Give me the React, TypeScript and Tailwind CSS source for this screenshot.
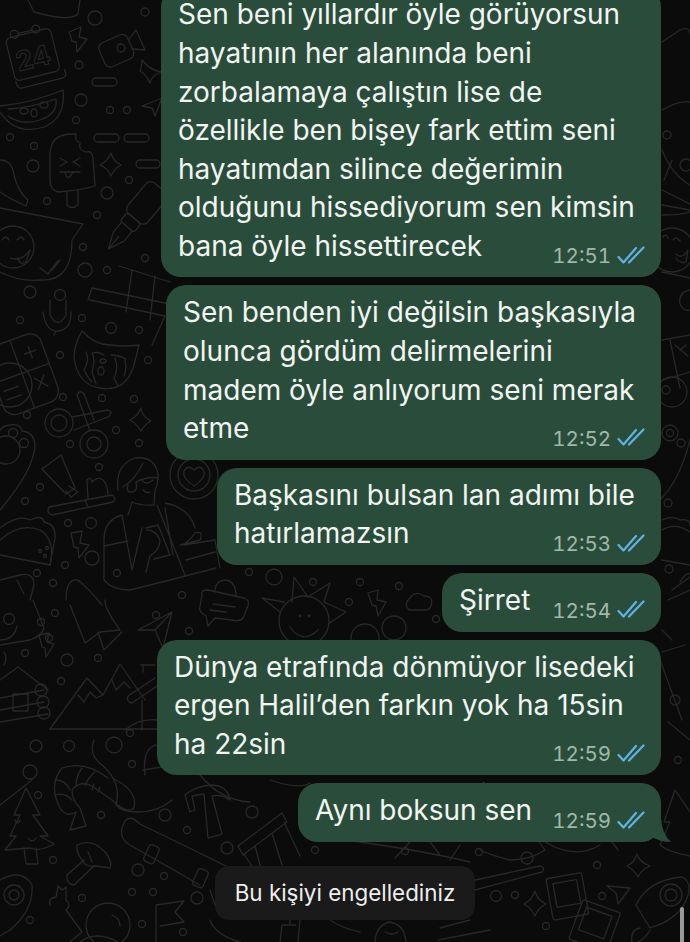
import React from 'react';

// wallpaper dots: [x, y, r]
const dots: number[][] = [
  [95, 18, 7], [121, 48, 4], [145, 12, 4], [79, 65, 4], [81, 100, 6], [110, 110, 3.5], [127, 110, 3.5], [76, 120, 3.5],
  [10, 137, 3.5], [34, 146, 3.5], [33, 166, 6], [129, 180, 3.5], [107, 193, 6], [47, 201, 3.5], [97, 215, 3.5], [83, 247, 3.5],
  [85, 270, 7], [145, 258, 3.5], [107, 270, 3.5], [30, 292, 6], [60, 295, 5.5], [20, 320, 3.5], [82, 318, 3.5], [111, 328, 5.5],
  [139, 330, 3.5], [60, 355, 3.5], [148, 360, 3.5], [63, 397, 3.5], [102, 398, 3.5], [134, 399, 3.5], [27, 415, 3.5], [116, 430, 3.5],
  [70, 444, 3.5], [139, 443, 3.5], [99, 467, 3.5], [40, 487, 3.5], [25, 501, 3.5], [68, 523, 3.5], [91, 523, 5.5], [37, 573, 3.5],
  [65, 565, 3.5], [53, 583, 3.5], [92, 558, 7], [182, 595, 3.5], [9, 619, 5.5], [41, 622, 3.5], [49, 638, 3.5], [117, 573, 3.5],
  [249, 572, 3.5], [274, 577, 8], [313, 582, 3.5], [360, 582, 3.5], [399, 586, 3.5], [349, 602, 3.5], [436, 619, 3.5], [489, 624, 3.5],
  [55, 613, 3.5], [156, 615, 3.5], [189, 631, 3.5], [25, 653, 3.5], [67, 660, 6], [98, 658, 3.5], [61, 681, 3.5], [36, 746, 6],
  [69, 746, 5.5], [130, 733, 3.5], [114, 745, 8], [132, 764, 3.5], [30, 772, 7], [38, 795, 3.5], [101, 815, 3.5], [165, 815, 6],
  [252, 812, 6], [187, 830, 3.5], [227, 848, 6], [138, 870, 6], [164, 876, 3.5], [53, 860, 3.5], [132, 892, 3.5], [153, 892, 3.5],
  [197, 898, 6], [82, 898, 3.5], [30, 920, 3.5], [142, 924, 3.5], [183, 932, 3.5], [527, 858, 6], [597, 865, 3.5], [496, 896, 5.5],
  [515, 895, 3.5], [602, 896, 3.5], [470, 877, 3.5], [546, 926, 3.5], [666, 390, 4], [667, 135, 4], [686, 165, 6], [668, 503, 4],
  [669, 569, 4], [440, 805, 3.5], [315, 850, 3.5], [405, 851, 3.5], [479, 852, 3.5], [675, 700, 5], [678, 760, 3.5], [350, 905, 3.5],
];

const Wallpaper = () => (
  <svg
    className="absolute inset-0"
    width="690"
    height="942"
    viewBox="0 0 690 942"
    fill="none"
    stroke="#282828"
    strokeWidth="1.3"
    strokeLinecap="round"
    strokeLinejoin="round"
  >
    {dots.map(([x, y, r], i) => (
      <circle key={i} cx={x} cy={y} r={r} />
    ))}

    {/* pills */}
    <rect x="92" y="78" width="25" height="8" rx="4" />
    <rect x="94" y="134" width="25" height="8" rx="4" />
    <rect x="124" y="134" width="25" height="8" rx="4" />
    <rect x="136" y="160" width="24" height="8" rx="4" />

    {/* top scrap + calendar */}
    <path d="M28 0 L34 12 Q70 22 78 14 L80 0" />
    <g transform="rotate(-14 35 55)">
      <rect x="10" y="32" width="46" height="44" rx="5" />
      <path d="M10 76 Q9 84 16 84 L56 84 Q62 84 60 76" />
      <circle cx="20" cy="30" r="4" />
      <circle cx="42" cy="30" r="4" />
      <path d="M24 30 H38" />
      <text x="15" y="67" fontFamily="Inter, sans-serif" fontSize="27" fontWeight="700" fill="none" stroke="#282828" strokeWidth="1">24</text>
    </g>
    {/* bolts */}
    <path d="M69 32 L81 27 L79 37 L87 39 L77 52 L76 42 L72 41 Z" />
    <path d="M39 635 L49 633 L47 642 L54 644 L46 657 L45 648 L42 647 Z" />
    <path d="M71 533 L82 531 L80 543 L89 545 L79 558 L78 548 L74 547 Z" />
    <path d="M368 593 L378 590 L377 600 L386 602 L378 616 L376 606 L372 605 Z" />
    {/* camera */}
    <g transform="rotate(-24 120 48)">
      <rect x="100" y="36" width="31" height="26" rx="6" />
      <path d="M131 44 L142 38 L142 60 L131 54" />
    </g>
    {/* sparkles */}
    <path d="M142 60 Q150 70 161 72 Q152 75 150 83 Q146 74 140 71 Q142 66 142 60 Z" />
    <path d="M111 153 Q113 161 121 165 Q114 169 111 176 Q108 168 100 165 Q108 161 111 153 Z" />
    <path d="M141 408 Q142 417 151 421 Q144 425 141 431 Q137 424 130 420 Q138 416 141 408 Z" />
    <path d="M535 891 Q537 900 546 904 Q538 908 535 916 Q531 908 524 904 Q532 900 535 891 Z" />
    <path d="M637 854 Q639 862 650 866 Q641 870 638 877 Q634 870 627 866 Q635 862 637 854 Z" />
    {/* plane */}
    <path d="M142 106 L162 98 L155 116 L152 108 Z" />
    <path d="M607 886 L630 888 L618 904 L616 893 Z" />
    <path d="M138 630 L172 612 L163 648 L155 630 Z M155 630 L172 612" />
    <path d="M32 780 L0 805" />
    {/* watermelon */}
    <path d="M0 106 Q32 103 63 90 Q66 118 44 127 Q16 136 0 112" />
    <path d="M8 109 Q30 108 56 99 Q58 114 40 120 Q22 126 8 116" />
    <ellipse cx="24" cy="111" rx="4" ry="3" />
    <ellipse cx="34" cy="113" rx="3" ry="4" />
    <ellipse cx="44" cy="105" rx="4" ry="3" />
    {/* popsicle */}
    <path d="M50 155 Q50 134 72 134 L76 134 Q74 140 80 143 Q78 150 86 152 Q92 150 93 158 L95 186 Q82 190 58 192 Q50 190 50 180 Z" />
    <path d="M67 192 V205 Q72 210 78 205 V190" />
    <path d="M60 158 L67 162 L60 166 M80 158 L73 162 L80 166 M60 172 H80 M65 172 Q67 183 73 172" />
    {/* chili */}
    <path d="M0 160 Q12 160 14 175 Q18 192 28 200 L26 206 Q8 198 0 192" />
    {/* bowl + smile */}
    <path d="M0 208 L83 224 L72 240 Q72 282 40 280 Q20 282 0 272" />
    <circle cx="13" cy="247" r="21" />
    <path d="M2 240 Q6 234 9 240 M17 240 Q21 234 24 240 M10 258 Q22 262 30 250 L26 262 Q20 266 18 258" />
    <path d="M40 268 L48 274 L58 261 M52 270 L60 260" />
    {/* pen */}
    <g transform="rotate(40 130 220)">
      <rect x="119" y="176" width="26" height="40" rx="6" />
      <rect x="123" y="216" width="18" height="11" rx="3" />
      <path d="M125 227 L125 240 L132 256 L139 240 L139 227 M132 256 V240" />
    </g>
    {/* window grid */}
    <path d="M119 266 L170 282 M92 288 L170 304 M132 270 L126 312 M155 276 L150 320 M92 288 L88 300" />
    <path d="M90 300 L165 316 L152 345" />
    {/* mic */}
    <path d="M50 300 V315 Q58 330 66 315 V300 M43 312 Q46 332 58 331 Q71 330 71 312 M56 331 L54 335" />
    {/* cat */}
    <path d="M82 331 Q95 345 110 345 Q125 347 139 345 Q136 358 133 368 Q125 392 100 388 Q78 385 74 358 Q74 345 82 331 Z" />
    <path d="M86 352 Q90 360 84 370 Q88 378 92 382 M92 353 Q96 360 92 372 L96 384 M115 358 Q119 368 114 378 L118 386 M125 360 Q127 370 124 376 M93 353 Q98 351 104 355 M111 355 Q118 355 126 359" />
    <ellipse cx="103" cy="361" rx="3" ry="2" />
    <ellipse cx="101" cy="371" rx="3" ry="4" />
    {/* calculator */}
    <g transform="rotate(-20 25 370)">
      <rect x="-8" y="337" width="58" height="72" rx="12" />
      <path d="M-8 372 H50 M21 337 V409 M30 355 H42 M36 349 V361 M31 381 L41 393 M41 381 L31 393 M-2 383 H13 M-2 392 H13" />
    </g>
    <circle cx="10" cy="385" r="22" />
    {/* scissors */}
    <circle cx="59" cy="423" r="14" />
    <circle cx="59" cy="423" r="8" />
    <circle cx="94" cy="444" r="14" />
    <circle cx="94" cy="444" r="7" />
    <path d="M72 417 L108 410 Q114 412 108 417 L74 430 M90 431 L77 395 Q80 389 84 394 L94 420" />
    {/* paw */}
    <path d="M0 510 Q34 470 35 445 Q34 432 22 431 Q20 423 10 425 Q4 425 0 430" />
    <circle cx="13" cy="433" r="4.5" />
    <circle cx="24" cy="443" r="4.5" />
    <circle cx="6" cy="450" r="14" />
    {/* tube */}
    <path d="M42 469 L61 455 L75 488 L66 494 Z M69 486 L78 492 L71 497 L66 491" />
    {/* toast tray */}
    <path d="M49 507 L112 495 Q117 498 113 502 L52 515 Q46 513 49 507 Z M85 500 L88 507" />
    <path d="M88 499 L87 480 Q90 476 92 482 Q97 476 103 480 Q107 483 108 494" />
    {/* man */}
    <path d="M118 490 Q115 465 135 458 Q152 456 157 470 Q160 480 155 490 L154 505 Q142 506 132 502 L128 515" />
    <path d="M123 487 Q135 480 143 463 M136 482 Q148 476 158 478 M128 485 Q125 493 133 492 Q138 490 136 483 M142 480 Q146 486 153 480 M143 490 Q147 494 150 492" />
    <path d="M122 515 Q104 520 104 540 V580 Q112 590 130 590 L170 580 L216 568 M165 503 Q190 508 195 528 M122 515 L132 570 L142 528 M157 505 L185 575 M104 546 L128 541 M165 508 L173 555" />
    <path d="M146 528 L158 525 L170 555 L154 559 M147 530 Q156 530 160 540 Q160 550 150 556 L146 572" />
    <path d="M180 545 L200 540 Q204 530 195 533 Q192 538 183 545 M183 545 L215 540 L220 568 M186 560 L215 552" />
    {/* coffee heart */}
    <circle cx="194" cy="475" r="24" />
    <circle cx="194" cy="475" r="16" />
    <path d="M194 486 Q182 478 184 471 Q188 464 194 470 Q200 464 204 471 Q206 478 194 486 Z" />
    {/* taco */}
    <path d="M0 528 Q18 514 30 520 Q42 514 44 522 Q56 524 55 538 L50 565 L0 555" />
    <path d="M0 540 Q20 522 40 530 Q56 540 50 565" />
    <circle cx="40" cy="551" r="1.5" />
    <circle cx="47" cy="548" r="1.5" />
    <circle cx="45" cy="556" r="1.5" />
    {/* bread */}
    <path d="M0 580 L20 575 Q34 572 34 585 L30 600 M0 578 M17 580 L24 594" />
    <path d="M66 600 Q66 578 78 580 Q90 590 102 605" />
    {/* lock chat */}
    <path d="M202 595 Q200 590 208 590 L244 598 Q250 600 248 606 L243 618 Q240 622 232 620 L215 618 L208 626 L206 616 Q198 612 200 606 Z" />
    <path d="M215 590 Q216 580 226 580 Q236 582 236 596 M213 604 L235 607 M210 610 L226 612" />
    {/* sun */}
    <circle cx="304" cy="621" r="25" />
    <path d="M292 602 L294 577 L308 597 L330 583 L324 602 L346 612 L328 624 M280 612 L262 598 L284 602 M290 627 Q302 645 318 630" />
    <circle cx="300" cy="616" r="0.8" />
    <circle cx="309" cy="616" r="0.8" />
    {/* cloud */}
    <path d="M409 610 Q403 604 410 598 Q416 590 424 596 Q434 596 431 606 Q430 610 424 610 Z" />
    <circle cx="365" cy="638" r="14" />
    <circle cx="394" cy="628" r="12" />
    {/* rocket top-left of bubble 5 */}
    <path d="M70 605 L85 643 L100 632 L120 630 Q104 608 105 600" />
    <path d="M98 632 L104 650 L122 632" />
    <path d="M0 640 Q14 640 17 626 M33 600 L44 628 Q42 636 30 640 L0 645" />
    {/* log cabin */}
    <path d="M0 680 L18 667 L48 690 M0 698 L44 690 M0 710 L44 702 M0 722 L48 714" />
    <circle cx="41" cy="690" r="6" />
    <circle cx="43" cy="702" r="6" />
    <circle cx="44" cy="713" r="6" />
    <rect x="13" y="694" width="15" height="17" />
    <path d="M4 652 Q8 658 4 665" />
    {/* mountains */}
    <path d="M50 729 L87 678 L103 695 L120 664 L145 700 M78 695 L84 702 L90 692 L96 698 L103 695 M112 680 L116 690 L124 682 L130 688" />
    <path d="M50 729 H160" />
    <path d="M128 696 L155 678 M128 696 Q126 702 132 703 L157 686 M141 665 H155 M143 665 V672 M142 700 V730 M125 730 Q140 718 157 720" />
    {/* shrimp */}
    <path d="M108 778 Q85 760 62 768 Q48 785 60 808 Q66 818 76 812 L70 830 L86 826 L80 808 Q72 800 72 790 Q80 780 92 786 Q105 795 112 800 Q128 815 134 808 Q138 790 112 778" />
    <path d="M55 780 Q66 780 70 790 M55 795 Q65 792 72 800 M82 768 Q76 776 76 786 M95 772 Q88 778 85 785 M92 790 L94 784 M98 792 L100 787" />
    <path d="M94 740 Q88 755 102 765 Q122 782 116 805 Q122 812 138 812 Q158 812 172 800" />
    {/* hat */}
    <path d="M145 775 Q142 750 155 745 M143 770 L175 765 M155 745 Q172 755 180 770" />
    {/* tree */}
    <path d="M26 788 L40 815 L33 815 L48 836 L40 836 L54 844 Q40 852 30 848 L5 850 L16 836 L10 836 L20 815 L14 815 Z" />
    <path d="M24 848 L26 864 L38 864 L36 848 M15 820 Q18 826 20 820 M28 838 Q32 844 36 838" />
    {/* mushroom */}
    <path d="M77 845 Q92 838 105 852 Q113 862 110 868 L96 866 Q86 868 82 860 Q76 852 77 845 Z" />
    <path d="M84 860 L67 875 Q66 884 74 885 L94 866 M88 852 L92 862" />
    {/* hammer */}
    <path d="M185 795 L190 812 L195 810 L192 796 L204 794 L208 838 L222 834 L212 796 Q222 794 230 800 Q228 786 212 785 Q195 786 185 795 Z" />
    {/* snowboard */}
    <path d="M123 825 Q128 812 140 824 L226 866 M123 825 Q118 838 130 845 L200 885" />
    <rect x="146" y="845" width="11" height="18" rx="3" transform="rotate(24 151 854)" />
    <rect x="195" y="869" width="11" height="18" rx="3" transform="rotate(24 200 878)" />
    {/* drum */}
    <path d="M238 846 L282 813 L287 822 L243 855 Z M244 854 L262 882 M284 822 L300 856 M255 846 L264 880 M272 833 L282 865" />
    {/* avocado */}
    <path d="M0 880 Q22 868 32 885 Q34 910 10 930 L0 936" />
    <circle cx="14" cy="895" r="10" />
    <circle cx="14" cy="895" r="5" />
    {/* astronaut */}
    <circle cx="108" cy="925" r="22" />
    <path d="M50 905 Q48 898 56 897 L58 886 L62 890 L66 887 L66 900 Q72 905 66 910 L82 932 L70 942 M80 942 Q96 930 118 942 M112 915 Q120 918 120 926" />
    {/* flag */}
    <path d="M156 942 V905 L184 901 L175 912 L184 922 L160 926" />
    {/* photos */}
    <g transform="rotate(-10 570 900)">
      <rect x="550" y="875" width="36" height="42" rx="2" />
      <rect x="556" y="881" width="24" height="24" />
    </g>
    <g transform="rotate(20 595 925)">
      <rect x="575" y="905" width="40" height="42" rx="2" />
      <rect x="581" y="911" width="27" height="24" />
    </g>
    {/* rocket bottom right */}
    <path d="M636 905 Q648 880 682 877 Q692 882 688 895 Q682 918 650 928 Z" />
    <circle cx="671" cy="895" r="11" />
    <circle cx="671" cy="895" r="6" />
    <path d="M640 928 Q630 930 632 942 M650 930 Q646 938 638 942" />
    {/* tree right */}
    <path d="M675 790 L690 812 M675 790 L664 822 L670 822 L660 845 Q668 852 690 856" />
    {/* ski + misc bottom */}
    <path d="M475 880 L540 866 M475 890 L542 872 Q546 868 540 866" />
    <path d="M483 782 Q510 800 545 850 Q530 860 510 860 Q490 855 480 850" />
    <path d="M392 870 L398 884 L412 870 M310 898 Q325 925 360 932" />
    <path d="M300 920 L298 942 M280 942 L282 925 L296 925 M290 925 V916" />
    <path d="M375 942 Q376 925 390 922 Q405 925 406 942 M385 932 Q392 936 398 932" />
    <path d="M440 928 L470 920 M438 940 L490 930" />
    <path d="M210 920 Q215 935 240 942 M210 890 L215 905" />
    <path d="M345 840 Q420 850 470 862 M410 842 L395 858 M430 842 L440 855 M270 780 Q300 790 310 783" />
    <path d="M200 775 Q220 800 250 802 M460 845 L450 860 M545 842 Q575 860 600 845 M612 842 L618 850" />
    {/* strip on the right edge */}
    <path d="M662 42 L680 30 M680 30 Q690 26 690 34 M662 110 Q680 100 690 102" />
    <path d="M662 150 Q672 175 690 185 M662 190 L690 204 M664 180 L672 160 M662 205 L690 210 M662 215 Q680 215 690 212" />
    <circle cx="672" cy="250" r="22" />
    <path d="M663 237 Q666 233 668 238 M673 240 Q676 236 680 241 M676 254 Q682 260 688 250 L686 262 Q680 264 676 258" />
    <path d="M662 272 L690 278 M690 290 Q678 292 680 304 Q684 312 690 310" />
    <path d="M662 340 L690 335 M670 340 L680 388 M662 380 L690 372 M680 350 L686 345 M675 345 L688 356" />
    <circle cx="672" cy="392" r="15" />
    <circle cx="670" cy="433" r="8" />
    <circle cx="670" cy="433" r="3.5" />
    <circle cx="681" cy="443" r="4" />
    <path d="M690 440 Q680 480 660 500 M662 520 Q672 515 680 520 Q690 518 690 526 M662 530 Q675 522 690 532 M662 560 L690 565" />
    <path d="M680 582 Q686 572 690 574 M672 590 L690 577 M668 600 L690 590" />
    <path d="M662 630 L672 640 M662 652 L685 645" />
    <path d="M682 720 L660 660 M690 740 L668 722" />
  </svg>
);

const DoubleCheck = () => (
  <svg width="28" height="19" viewBox="0 0 28 19" fill="none" stroke="#62b2e2" strokeWidth="2.2" strokeLinecap="round" strokeLinejoin="round">
    <path d="M1.5 11 L6.5 16.5 L19 2" />
    <path d="M12 16.5 L26.5 1.5" />
  </svg>
);

type BubbleProps = { lines: string[]; time: string; width: string; tail?: boolean };

const Bubble = ({ lines, time, width, tail }: BubbleProps) => (
  <div className={`relative ${width} rounded-[20px] bg-[#294d3a] pl-[17px] pt-[8px] pb-[12px] text-[28px] leading-[38.6px] text-[#f2f4f2]`}>
    {lines.map((l) => (
      <div key={l} className="whitespace-nowrap">{l}</div>
    ))}
    <div className="absolute right-[16px] bottom-[9px] flex items-center gap-[6px]">
      <span className="mt-[2px] text-[20.5px] leading-[24px] tabular-nums text-[#a0b8a9]">{time}</span>
      <DoubleCheck />
    </div>
    {tail && (
      <svg className="absolute -right-[11px] bottom-0" width="24" height="24" viewBox="0 0 24 24">
        <path d="M0 0 H13 Q14 16 23 24 Q12 24 4 19 Q0 22 0 24 Z" fill="#294d3a" />
      </svg>
    )}
  </div>
);

export default function App() {
  return (
    <div className="relative h-[942px] w-[690px] overflow-hidden bg-[#0b0b0b] font-['Inter',sans-serif]">
      <Wallpaper />

      <div className="relative flex h-full flex-col justify-end pb-[22px]">
        <div className="flex flex-col items-end gap-2 pr-[29px]">
          <Bubble
            width="w-[500px]"
            time="12:51"
            lines={[
              'Sen beni yıllardır öyle görüyorsun',
              'hayatının her alanında beni',
              'zorbalamaya çalıştın lise de',
              'özellikle ben bişey fark ettim seni',
              'hayatımdan silince değerimin',
              'olduğunu hissediyorum sen kimsin',
              'bana öyle hissettirecek',
            ]}
          />
          <Bubble
            width="w-[495px]"
            time="12:52"
            lines={[
              'Sen benden iyi değilsin başkasıyla',
              'olunca gördüm delirmelerini',
              'madem öyle anlıyorum seni merak',
              'etme',
            ]}
          />
          <Bubble width="w-[444px]" time="12:53" lines={['Başkasını bulsan lan adımı bile', 'hatırlamazsın']} />
          <Bubble width="w-[219px]" time="12:54" lines={['Şirret']} />
          <Bubble
            width="w-[504px]"
            time="12:59"
            lines={['Dünya etrafında dönmüyor lisedeki', 'ergen Halil’den farkın yok ha 15sin', 'ha 22sin']}
          />
          <Bubble width="w-[363px]" time="12:59" lines={['Aynı boksun sen']} tail />
        </div>

        <div className="mt-[24px] flex justify-center">
          <div className="rounded-[14px] bg-[#1a1a1a] px-[20px] py-[12px] text-[22.4px] leading-[30px] text-[#eeeeee]">
            Bu kişiyi engellediniz
          </div>
        </div>
      </div>

      {/* scroll indicator */}
      <div className="absolute right-[6px] bottom-0 h-[35px] w-[4px] rounded-t-full bg-[#9a9a9a]" />
    </div>
  );
}
